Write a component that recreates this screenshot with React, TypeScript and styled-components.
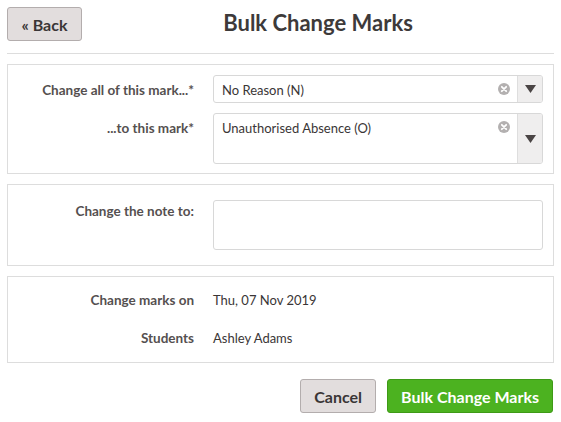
import React from "react";
import styled, { createGlobalStyle } from "styled-components";

const Global = createGlobalStyle`
  html, body { margin: 0; padding: 0; background: #fff; }
  body { font-family: Lato, "Noto Sans", sans-serif; color: #333; }
  * { box-sizing: border-box; }
`;

const Page = styled.div`
  padding: 7px;
  width: 561px;
`;

const Header = styled.div`
  display: flex;
  align-items: center;
  padding-bottom: 12px;
  border-bottom: 1px solid #dddddd;
  margin-bottom: 10px;
`;

const Button = styled.button<{ $primary?: boolean }>`
  font-family: inherit;
  font-weight: 700;
  font-size: 16px;
  height: 34px;
  padding: 0 13px;
  border-radius: 3px;
  border: 1px solid ${(p) => (p.$primary ? "#3e9a17" : "#b3adad")};
  background: ${(p) => (p.$primary ? "#4cb220" : "#e2dddd")};
  color: ${(p) => (p.$primary ? "#ffffff" : "#3a3636")};
  cursor: pointer;
`;

const BackButton = styled(Button)`
  flex: none;
  width: 75px;
  padding: 0;
`;

const Title = styled.h1`
  flex: 1;
  margin: 0;
  font-size: 22px;
  font-weight: 700;
  color: #3d3a3a;
  text-align: center;
  line-height: 28px;
  padding-bottom: 2px;
`;

const Panel = styled.div<{ $pt: number; $pb: number; $gap?: number }>`
  border: 1px solid #dddddd;
  padding: ${(p) => p.$pt}px 10px ${(p) => p.$pb}px 0;
  margin-bottom: 10px;
  display: flex;
  flex-direction: column;
  gap: ${(p) => p.$gap ?? 10}px;
`;

const Row = styled.div`
  display: grid;
  grid-template-columns: 186px 1fr;
  column-gap: 19px;
  align-items: start;
`;

const Label = styled.div<{ $pad?: number }>`
  text-align: right;
  font-weight: 700;
  font-size: 13.5px;
  color: #555050;
  padding-top: ${(p) => p.$pad ?? 7}px;
`;

const Value = styled.div`
  font-size: 13px;
  color: #3a3636;
  padding-top: 7px;
`;

const Select = styled.div<{ $tall?: boolean }>`
  display: flex;
  height: ${(p) => (p.$tall ? 51 : 28)}px;
  border: 1px solid #d8d8d8;
  border-radius: 3px;
  background: #fff;
  overflow: hidden;
`;

const SelectText = styled.div`
  flex: 1;
  font-size: 13px;
  color: #3a3636;
  padding: 6px 8px;
`;

const Clear = styled.div`
  width: 26px;
  display: flex;
  justify-content: center;
  padding-top: 7px;
`;

const Arrow = styled.div`
  width: 25px;
  border-left: 1px solid #dedede;
  background: #efeeee;
  display: flex;
  align-items: center;
  justify-content: center;
`;

const TextArea = styled.textarea`
  height: 50px;
  width: 100%;
  border: 1px solid #d8d8d8;
  border-radius: 3px;
  resize: none;
  font-family: inherit;
  font-size: 13px;
`;

const Footer = styled.div`
  display: flex;
  justify-content: flex-end;
  gap: 11px;
  padding-top: 6px;
  padding-right: 1px;
`;

const ClearIcon = () => (
  <svg width="12" height="12" viewBox="0 0 12 12">
    <circle cx="6" cy="6" r="6" fill="#b3b0b0" />
    <path d="M3.8 3.8 L8.2 8.2 M8.2 3.8 L3.8 8.2" stroke="#fff" strokeWidth="1.8" strokeLinecap="round" />
  </svg>
);

const ArrowIcon = () => (
  <svg width="11" height="8" viewBox="0 0 11 8">
    <path d="M0 0 H11 L5.5 8 Z" fill="#4a4545" />
  </svg>
);

export default function App() {
  return (
    <>
      <Global />
      <Page>
        <Header>
          <BackButton>« Back</BackButton>
          <Title>Bulk Change Marks</Title>
        </Header>
        <Panel $pt={10} $pb={9}>
          <Row>
            <Label>Change all of this mark...*</Label>
            <Select>
              <SelectText>No Reason (N)</SelectText>
              <Clear><ClearIcon /></Clear>
              <Arrow><ArrowIcon /></Arrow>
            </Select>
          </Row>
          <Row>
            <Label>...to this mark*</Label>
            <Select $tall>
              <SelectText>Unauthorised Absence (O)</SelectText>
              <Clear><ClearIcon /></Clear>
              <Arrow><ArrowIcon /></Arrow>
            </Select>
          </Row>
        </Panel>
        <Panel $pt={15} $pb={15}>
          <Row>
            <Label $pad={3}>Change the note to:</Label>
            <TextArea />
          </Row>
        </Panel>
        <Panel $pt={8} $pb={16} $gap={15}>
          <Row>
            <Label>Change marks on</Label>
            <Value>Thu, 07 Nov 2019</Value>
          </Row>
          <Row>
            <Label>Students</Label>
            <Value>Ashley Adams</Value>
          </Row>
        </Panel>
        <Footer>
          <Button>Cancel</Button>
          <Button $primary>Bulk Change Marks</Button>
        </Footer>
      </Page>
    </>
  );
}
